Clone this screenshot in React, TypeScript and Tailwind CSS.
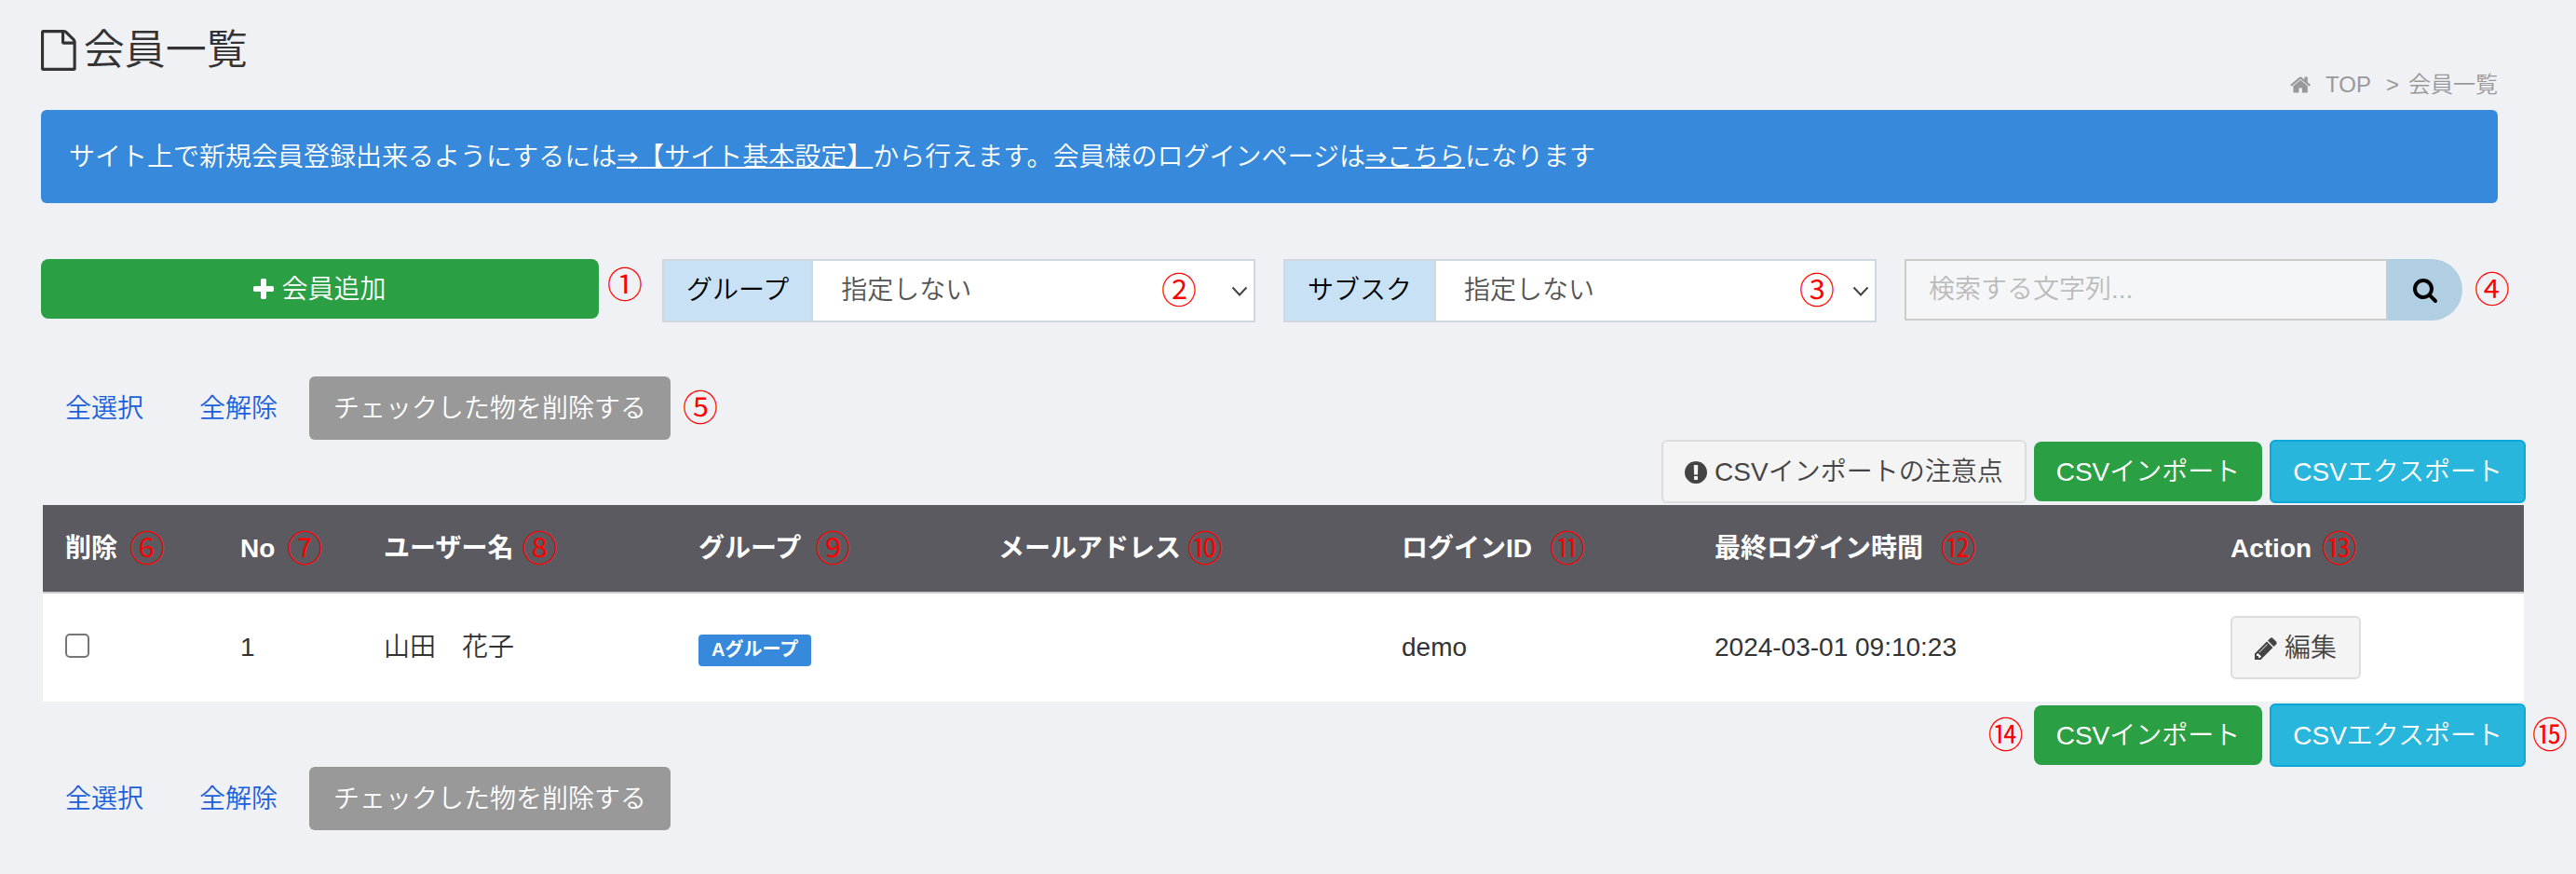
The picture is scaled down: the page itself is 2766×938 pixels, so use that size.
import { useState } from "react";
import type { ReactNode } from "react";

const ICONS = {
  file: {
    box: "128 0 1536 1792",
    d: "M1596 380q28 28 48 76t20 88v1152q0 40-28 68t-68 28h-1344q-40 0-68-28t-28-68v-1600q0-40 28-68t68-28h896q40 0 88 20t76 48zm-444-244v376h376q-10-29-22-41l-313-313q-12-12-41-22zm384 1528v-1024h-416q-40 0-68-28t-28-68v-416h-768v1536h1280z",
  },
  home: {
    box: "64 0 1664 1792",
    d: "M1472 992v480q0 26-19 45t-45 19h-384v-384h-256v384h-384q-26 0-45-19t-19-45v-480q0-1 .5-3t.5-3l575-474 575 474q1 2 1 6zm223-69l-62 74q-8 9-21 11h-3q-13 0-21-7l-692-577-692 577q-12 8-24 7-13-2-21-11l-62-74q-8-10-7-23.5t11-21.5l719-599q32-26 76-26t76 26l244 204v-195q0-14 9-23t23-9h192q14 0 23 9t9 23v408l219 182q10 8 11 21.5t-7 23.5z",
  },
  plus: {
    box: "192 0 1408 1792",
    d: "M1600 736v192q0 40-28 68t-68 28h-416v416q0 40-28 68t-68 28h-192q-40 0-68-28t-28-68v-416h-416q-40 0-68-28t-28-68v-192q0-40 28-68t68-28h416v-416q0-40 28-68t68-28h192q40 0 68 28t28 68v416h416q40 0 68 28t28 68z",
  },
  search: {
    box: "64 0 1664 1792",
    d: "M1216 832q0-185-131.5-316.5t-316.5-131.5-316.5 131.5-131.5 316.5 131.5 316.5 316.5 131.5 316.5-131.5 131.5-316.5zm512 832q0 52-38 90t-90 38q-54 0-90-38l-343-342q-179 124-399 124-143 0-273.5-55.5t-225-150-150-225-55.5-273.5 55.5-273.5 150-225 225-150 273.5-55.5 273.5 55.5 225 150 150 225 55.5 273.5q0 220-124 399l343 343q37 37 37 90z",
  },
  notice: {
    box: "128 0 1536 1792",
    d: "M896 128q209 0 385.5 103t279.5 279.5 103 385.5-103 385.5-279.5 279.5-385.5 103-385.5-103-279.5-279.5-103-385.5 103-385.5 279.5-279.5 385.5-103zm128 1247v-190q0-14-9-23.5t-22-9.5h-192q-13 0-23 10t-10 23v190q0 13 10 23t23 10h192q13 0 22-9.5t9-23.5zm-2-344l18-621q0-12-10-18-10-8-24-8h-220q-14 0-24 8-10 6-10 18l17 621q0 10 10 17.5t24 7.5h185q14 0 23.5-7.5t10.5-17.5z",
  },
  pencil: {
    box: "128 0 1536 1792",
    d: "M491 1536l91-91-235-235-91 91v107h128v128h107zm523-928q0-22-22-22-10 0-17 7l-542 542q-7 7-7 17 0 22 22 22 10 0 17-7l542-542q7-7 7-17zm-54-192l416 416-832 832h-416v-416zm683 96q0 53-37 90l-166 166-416-416 166-165q36-38 90-38 53 0 91 38l235 234q37 39 37 91z",
  },
};

const COLUMNS = [
  { label: "削除", mark: "⑥", width: "w-[188px]", gap: "gap-3.5" },
  { label: "No", mark: "⑦", width: "w-[154px]", gap: "gap-3.5" },
  { label: "ユーザー名", mark: "⑧", width: "w-[338px]", gap: "gap-2.5" },
  { label: "グループ", mark: "⑨", width: "w-[322px]", gap: "gap-4" },
  { label: "メールアドレス", mark: "⑩", width: "w-[433px]", gap: "gap-2" },
  { label: "ログインID", mark: "⑪", width: "w-[336px]", gap: "gap-5" },
  { label: "最終ログイン時間", mark: "⑫", width: "w-[554px]", gap: "gap-5" },
  { label: "Action", mark: "⑬", width: "w-[339px]", gap: "gap-3" },
];

const members = [
  {
    no: 1,
    name: "山田　花子",
    group: "Aグループ",
    email: "",
    loginId: "demo",
    lastLogin: "2024-03-01 09:10:23",
  },
];

function Icon({ name, className }: { name: keyof typeof ICONS; className: string }) {
  return (
    <svg viewBox={ICONS[name].box} fill="currentColor" aria-hidden="true" className={`w-auto shrink-0 ${className}`}>
      <path d={ICONS[name].d} />
    </svg>
  );
}

function Mark({ children, className = "" }: { children: ReactNode; className?: string }) {
  return (
    <span
      className={`flex h-9 w-9 shrink-0 items-center justify-center text-[38px] leading-9 font-[350] text-[#ff0000] ${className}`}
    >
      {children}
    </span>
  );
}

function FilterSelect({ id, label, mark, markClass }: { id: string; label: string; mark: string; markClass: string }) {
  return (
    <div className="relative flex h-[68px] border-2 border-[#d1d7e0] bg-white">
      <label
        htmlFor={id}
        className="flex shrink-0 items-center border-r-2 border-[#d1d7e0] bg-[#c9e1f5] px-6 text-black"
      >
        {label}
      </label>
      <select id={id} className="min-w-0 flex-1 appearance-none bg-white pl-[30px] text-[#555555] outline-none">
        <option>指定しない</option>
      </select>
      <Mark className={`pointer-events-none absolute top-3.5 ${markClass}`}>{mark}</Mark>
      <svg
        viewBox="0 0 18 12"
        fill="none"
        stroke="#444444"
        strokeWidth="2"
        aria-hidden="true"
        className="pointer-events-none absolute top-[27px] right-1.5 h-3 w-[18px]"
      >
        <path d="M1.5 1.5 9 9.5l7.5-8" />
      </svg>
    </div>
  );
}

function BulkActions({ mark }: { mark?: string }) {
  return (
    <div className="flex items-center gap-2">
      <a href="#select" className="px-[26px] pt-[15px] pb-[13px] text-[#1a5fdc]">
        全選択
      </a>
      <a href="#clear" className="px-[26px] pt-[15px] pb-[13px] text-[#1a5fdc]">
        全解除
      </a>
      <button type="button" className="rounded-md bg-[#999999] px-[26px] pt-[15px] pb-[13px] text-white">
        チェックした物を削除する
      </button>
      {mark && <Mark className="ml-1.5">{mark}</Mark>}
    </div>
  );
}

function CsvButtons() {
  return (
    <>
      <button type="button" className="rounded-lg bg-[#2b9f44] px-6 pt-[13px] pb-[11px] text-white">
        CSVインポート
      </button>
      <button
        type="button"
        className="rounded-md border-2 border-[#0aa8d8] bg-[#29b6dc] px-[23px] pt-[13px] pb-[11px] text-white"
      >
        CSVエクスポート
      </button>
    </>
  );
}

export default function App() {
  const [keyword, setKeyword] = useState("");

  return (
    <div className="min-h-screen bg-[#f0f1f5] pb-12 font-['Liberation_Sans','Noto_Sans_CJK_JP',sans-serif] text-[28px] leading-10 font-[350] text-[#333333]">
      <div className="pr-[84px] pl-11">
        {/* Title */}
        <header className="flex items-end justify-between pt-[22px] pb-[11px]">
          <h1 className="flex items-center gap-2 pb-[21px] text-[44px] leading-[64px] font-[350]">
            <Icon name="file" className="h-11" />
            会員一覧
          </h1>
          <nav className="flex items-center text-[24px] leading-8 text-[#999999]">
            <a href="#top" className="flex items-center gap-4">
              <Icon name="home" className="h-6" />
              TOP
            </a>
            <span className="mr-2.5 ml-4">&gt;</span>
            <span>会員一覧</span>
          </nav>
        </header>

        <p className="rounded-md bg-[#378adb] px-[30px] pt-[31px] pb-[29px] text-white">
          サイト上で新規会員登録出来るようにするには
          <a href="#settings" className="underline decoration-2">
            <span className="font-['DejaVu_Sans',sans-serif]">⇒</span>【サイト基本設定】
          </a>
          から行えます。会員様のログインページは
          <a href="#login" className="underline decoration-2">
            <span className="font-['DejaVu_Sans',sans-serif]">⇒</span>こちら
          </a>
          になります
        </p>

        {/* Filters */}
        <div className="mt-[60px] grid grid-cols-4 items-start gap-[30px]">
          <div className="flex items-start gap-2.5">
            <button
              type="button"
              className="flex flex-1 items-center justify-center gap-2 rounded-lg bg-[#2b9f44] pt-[13px] pb-[11px] text-white"
            >
              <Icon name="plus" className="h-7" />
              会員追加
            </button>
            <Mark className="-mr-2 mt-2.5">①</Mark>
          </div>
          <FilterSelect id="group" label="グループ" mark="②" markClass="right-[62px]" />
          <FilterSelect id="subscription" label="サブスク" mark="③" markClass="right-11" />
          <form className="flex items-center" onSubmit={(e) => e.preventDefault()}>
            <input
              type="text"
              aria-label="検索する文字列"
              placeholder="検索する文字列..."
              value={keyword}
              onChange={(e) => setKeyword(e.target.value)}
              className="h-[66px] min-w-0 flex-1 border-2 border-[#cccccc] bg-[#f5f6f8] px-6 outline-none placeholder:text-[#bbbbbb]"
            />
            <button
              type="submit"
              aria-label="検索"
              className="flex h-[66px] w-20 items-center justify-center rounded-r-full bg-[#b1cfe2] text-black"
            >
              <Icon name="search" className="h-7" />
            </button>
            <Mark className="-mr-3 ml-3.5">④</Mark>
          </form>
        </div>
      </div>

      <div className="mt-[58px] pr-[54px] pl-11">
        <BulkActions mark="⑤" />

        <div className="flex items-center justify-end gap-2">
          <button
            type="button"
            className="flex items-center gap-2 rounded-md border-2 border-[#dddddd] bg-[#f4f4f4] px-[23px] pt-[13px] pb-[11px] text-[#444444]"
          >
            <Icon name="notice" className="h-7" />
            CSVインポートの注意点
          </button>
          <CsvButtons />
        </div>

        {/* Members */}
        <div className="px-0.5 py-0.5">
          <table className="w-full table-fixed border-separate border-spacing-0 bg-white text-left">
            <thead className="bg-[#5b5a60] text-white">
              <tr>
                {COLUMNS.map((col) => (
                  <th key={col.label} className={`h-[95px] border-b-2 border-[#cccccc] p-0 pl-6 font-bold ${col.width}`}>
                    <span className={`flex items-center ${col.gap}`}>
                      {col.label}
                      <Mark>{col.mark}</Mark>
                    </span>
                  </th>
                ))}
              </tr>
            </thead>
            <tbody>
              {members.map((member) => (
                <tr key={member.no}>
                  <td className="py-6 pl-6">
                    <input
                      type="checkbox"
                      aria-label={`${member.name}を選択`}
                      className="-mt-1 block h-[26px] w-[26px] appearance-none rounded-[5px] border-2 border-[#767676] bg-white checked:bg-[#378adb]"
                    />
                  </td>
                  <td className="py-6 pl-6">{member.no}</td>
                  <td className="py-6 pl-6">{member.name}</td>
                  <td className="py-6 pl-6">
                    <span className="mt-1.5 block w-fit rounded bg-[#378adb] px-3.5 pt-px pb-[3px] text-[20px] leading-[30px] font-bold text-white">
                      {member.group}
                    </span>
                  </td>
                  <td className="py-6 pl-6">{member.email}</td>
                  <td className="py-6 pl-6">{member.loginId}</td>
                  <td className="py-6 pl-6">{member.lastLogin}</td>
                  <td className="py-6 pl-6">
                    <button
                      type="button"
                      className="flex items-center gap-2 rounded-md border-2 border-[#dddddd] bg-[#f4f4f4] px-6 pt-[13px] pb-[11px] text-[#444444]"
                    >
                      <Icon name="pencil" className="h-7" />
                      編集
                    </button>
                  </td>
                </tr>
              ))}
            </tbody>
          </table>
        </div>

        <div className="-mr-12 flex items-center justify-end gap-2">
          <Mark className="mr-1">⑭</Mark>
          <CsvButtons />
          <Mark className="mr-1">⑮</Mark>
        </div>

        <BulkActions />
      </div>
    </div>
  );
}
